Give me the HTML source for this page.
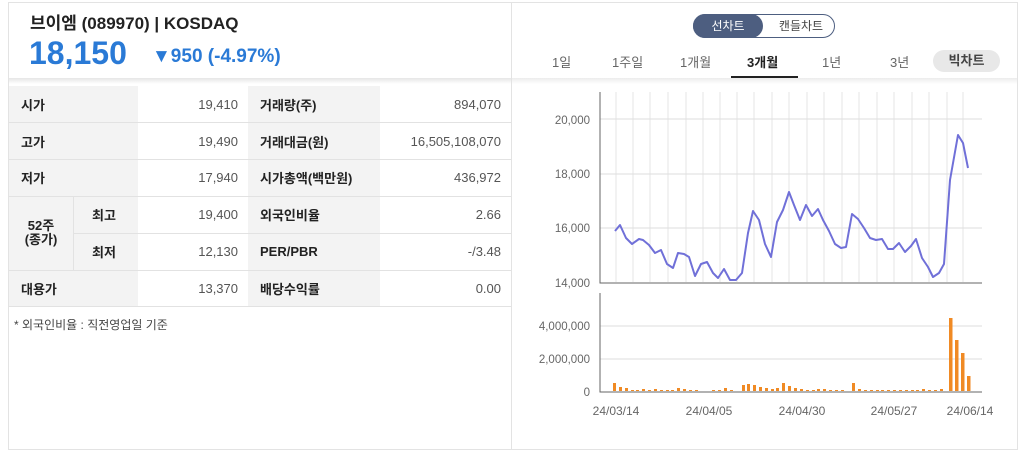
<!DOCTYPE html>
<html><head><meta charset="utf-8"><style>
*{margin:0;padding:0;box-sizing:border-box}
body{width:1024px;height:454px;background:#fff;font-family:"Liberation Sans","Noto Sans CJK KR",sans-serif;position:relative;overflow:hidden;color:#222}
.frame{position:absolute;left:8px;top:2px;width:1010px;height:448px;border:1px solid #e3e3e3}
.abs{position:absolute}
.cell{position:absolute;font-size:13px;display:flex;align-items:center}
.lab{background:#f3f3f3;font-weight:bold;padding-left:12px}
.val{justify-content:flex-end;padding-right:10px;color:#555}
.hl{position:absolute;height:1px;background:#e2e2e2}
.tab{position:absolute;top:52px;font-size:13px;color:#666}
</style></head><body>
<div class="frame"></div>
<div class="abs" style="left:511px;top:2px;width:1px;height:448px;background:#e3e3e3"></div>
<div class="abs" style="left:9px;top:78px;width:502px;height:6px;background:linear-gradient(#e6e6e6,#fff)"></div>
<div class="abs" style="left:512px;top:78px;width:505px;height:6px;background:linear-gradient(#ececec,#fff)"></div>
<div class="abs" style="left:30px;top:9px;font-size:17px;font-weight:bold;color:#222">브이엠 (089970) | KOSDAQ</div>
<div class="abs" style="left:29px;top:35px;font-size:32px;font-weight:bold;color:#2a7ad6">18,150</div>
<div class="abs" style="left:152px;top:46px;font-size:19px;font-weight:bold;color:#2a7ad6">▼950 (-4.97%)</div>
<div class="cell lab" style="left:9px;top:86px;width:129px;height:37px">시가</div>
<div class="cell val" style="left:138px;top:86px;width:110px;height:37px">19,410</div>
<div class="cell lab" style="left:248px;top:86px;width:132px;height:37px">거래량(주)</div>
<div class="cell val" style="left:380px;top:86px;width:131px;height:37px">894,070</div>
<div class="cell lab" style="left:9px;top:123px;width:129px;height:36px">고가</div>
<div class="cell val" style="left:138px;top:123px;width:110px;height:36px">19,490</div>
<div class="cell lab" style="left:248px;top:123px;width:132px;height:36px">거래대금(원)</div>
<div class="cell val" style="left:380px;top:123px;width:131px;height:36px">16,505,108,070</div>
<div class="cell lab" style="left:9px;top:159px;width:129px;height:37px">저가</div>
<div class="cell val" style="left:138px;top:159px;width:110px;height:37px">17,940</div>
<div class="cell lab" style="left:248px;top:159px;width:132px;height:37px">시가총액(백만원)</div>
<div class="cell val" style="left:380px;top:159px;width:131px;height:37px">436,972</div>
<div class="cell lab" style="left:9px;top:196px;width:64px;height:74px;padding-left:0;justify-content:center;text-align:center;line-height:14px">52주<br>(종가)</div>
<div class="cell lab" style="left:73px;top:196px;width:65px;height:37px;padding-left:19px">최고</div>
<div class="cell val" style="left:138px;top:196px;width:110px;height:37px">19,400</div>
<div class="cell lab" style="left:248px;top:196px;width:132px;height:37px">외국인비율</div>
<div class="cell val" style="left:380px;top:196px;width:131px;height:37px">2.66</div>
<div class="cell lab" style="left:73px;top:233px;width:65px;height:37px;padding-left:19px">최저</div>
<div class="cell val" style="left:138px;top:233px;width:110px;height:37px">12,130</div>
<div class="cell lab" style="left:248px;top:233px;width:132px;height:37px">PER/PBR</div>
<div class="cell val" style="left:380px;top:233px;width:131px;height:37px">-/3.48</div>
<div class="cell lab" style="left:9px;top:270px;width:129px;height:36px">대용가</div>
<div class="cell val" style="left:138px;top:270px;width:110px;height:36px">13,370</div>
<div class="cell lab" style="left:248px;top:270px;width:132px;height:36px">배당수익률</div>
<div class="cell val" style="left:380px;top:270px;width:131px;height:36px">0.00</div>
<div class="hl" style="left:9px;top:122px;width:502px"></div>
<div class="hl" style="left:9px;top:159px;width:502px"></div>
<div class="hl" style="left:9px;top:196px;width:502px"></div>
<div class="hl" style="left:73px;top:233px;width:438px"></div>
<div class="hl" style="left:9px;top:270px;width:502px"></div>
<div class="hl" style="left:9px;top:306px;width:502px"></div>
<div class="abs" style="left:73px;top:196px;width:1px;height:74px;background:#e2e2e2"></div>
<div class="abs" style="left:14px;top:316px;font-size:12px;color:#444">* 외국인비율 : 직전영업일 기준</div>
<div class="abs" style="left:693px;top:14px;width:142px;height:24px;border:1px solid #4d5e80;border-radius:12px"></div>
<div class="abs" style="left:693px;top:14px;width:70px;height:24px;background:#4d5e80;border-radius:12px;color:#fff;font-size:12px;text-align:center;line-height:24px">선차트</div>
<div class="abs" style="left:770px;top:14px;width:62px;height:24px;color:#444;font-size:12px;text-align:center;line-height:24px">캔들차트</div>
<div class="tab" style="left:552px">1일</div>
<div class="tab" style="left:612px">1주일</div>
<div class="tab" style="left:680px">1개월</div>
<div class="tab" style="left:747px;font-weight:bold;color:#222">3개월</div>
<div class="abs" style="left:731px;top:76px;width:67px;height:2px;background:#222"></div>
<div class="tab" style="left:822px">1년</div>
<div class="tab" style="left:890px">3년</div>
<div class="abs" style="left:933px;top:50px;width:67px;height:22px;background:#e8e8e8;border-radius:11px;font-size:13px;font-weight:bold;color:#444;text-align:center;line-height:21px">빅차트</div>
<svg class="abs" style="left:0;top:0" width="1024" height="454" font-family="Liberation Sans,sans-serif" font-size="12" fill="#666">
<g stroke="#e6e6e6" stroke-width="1">
<path d="M616 92V282M633 92V282M650 92V282M668 92V282M686 92V282M703 92V282M720 92V282M737 92V282M754 92V282M772 92V282M789 92V282M807 92V282M824 92V282M842 92V282M859 92V282M877 92V282M894 92V282M912 92V282M929 92V282M947 92V282M963 92V282"/>
</g>
<g stroke="#ddd"><path d="M600 119H982M600 174H982M600 228H982M600 326H982M600 359H982"/></g>
<path d="M600 92V283H982M600 293V392H982" stroke="#666" fill="none"/>
<g text-anchor="end" font-size="11.5"><text x="590" y="124">20,000</text><text x="590" y="178">18,000</text><text x="590" y="232">16,000</text><text x="590" y="287">14,000</text>
<text x="590" y="330">4,000,000</text><text x="590" y="363">2,000,000</text><text x="590" y="396">0</text></g>
<g text-anchor="middle"><text x="616" y="415">24/03/14</text><text x="709" y="415">24/04/05</text><text x="802" y="415">24/04/30</text><text x="894" y="415">24/05/27</text><text x="970" y="415">24/06/14</text></g>
<polyline fill="none" stroke="#7070d8" stroke-width="2" stroke-linejoin="round" points="615,231 620,225 626,238 632,244 639,239 643,240 649,245 655,253 661,250 667,264 673,268 678,253 684,254 689,257 695,276 701,264 707,262 713,273 718,278 724,269 730,280 736,280 742,273 748,233 753,211 759,220 765,244 771,257 777,222 783,210 789,192 794,205 800,220 806,205 812,216 818,209 823,220 829,231 835,244 841,248 846,247 852,214 858,219 864,228 870,238 876,240 882,239 888,249 893,249 899,243 905,252 911,246 916,239 922,258 928,267 933,277 939,273 944,264 950,180 958,135 963,143 968,168"/>
<g fill="#f08a24">
<rect x="613" y="383" width="3" height="8"/><rect x="619" y="387" width="3" height="4"/><rect x="625" y="388" width="3" height="3"/><rect x="631" y="390" width="3" height="1"/><rect x="636" y="390" width="3" height="1"/><rect x="642" y="389" width="3" height="2"/><rect x="648" y="390" width="3" height="1"/><rect x="654" y="389" width="3" height="2"/><rect x="660" y="390" width="3" height="1"/><rect x="666" y="390" width="3" height="1"/><rect x="671" y="390" width="3" height="1"/><rect x="677" y="388" width="3" height="3"/><rect x="683" y="389" width="3" height="2"/><rect x="689" y="390" width="3" height="1"/><rect x="695" y="390" width="3" height="1"/><rect x="712" y="390" width="3" height="1"/><rect x="718" y="390" width="3" height="1"/><rect x="724" y="388" width="3" height="3"/><rect x="730" y="390" width="3" height="1"/>
<rect x="742" y="385" width="3" height="6"/><rect x="747" y="384" width="3" height="7"/><rect x="753" y="385" width="3" height="6"/><rect x="759" y="387" width="3" height="4"/><rect x="765" y="388" width="3" height="3"/><rect x="771" y="389" width="3" height="2"/><rect x="776" y="388" width="3" height="3"/><rect x="782" y="383" width="3" height="8"/><rect x="788" y="386" width="3" height="5"/><rect x="794" y="388" width="3" height="3"/><rect x="800" y="389" width="3" height="2"/><rect x="806" y="390" width="3" height="1"/><rect x="812" y="390" width="3" height="1"/><rect x="817" y="389" width="3" height="2"/><rect x="823" y="389" width="3" height="2"/><rect x="829" y="390" width="3" height="1"/><rect x="835" y="390" width="3" height="1"/><rect x="841" y="390" width="3" height="1"/>
<rect x="852" y="383" width="3" height="8"/><rect x="858" y="389" width="3" height="2"/><rect x="864" y="390" width="3" height="1"/><rect x="870" y="390" width="3" height="1"/><rect x="876" y="390" width="3" height="1"/><rect x="881" y="390" width="3" height="1"/><rect x="887" y="390" width="3" height="1"/><rect x="893" y="390" width="3" height="1"/><rect x="899" y="390" width="3" height="1"/><rect x="905" y="390" width="3" height="1"/><rect x="911" y="390" width="3" height="1"/><rect x="916" y="390" width="3" height="1"/><rect x="922" y="389" width="3" height="2"/><rect x="928" y="390" width="3" height="1"/><rect x="934" y="390" width="3" height="1"/><rect x="940" y="389" width="3" height="2"/>
<rect x="949" y="318" width="3.5" height="73"/><rect x="955" y="340" width="3.5" height="51"/><rect x="961" y="353" width="3.5" height="38"/><rect x="967" y="376" width="3.5" height="15"/>
</g>
</svg>
</body></html>
